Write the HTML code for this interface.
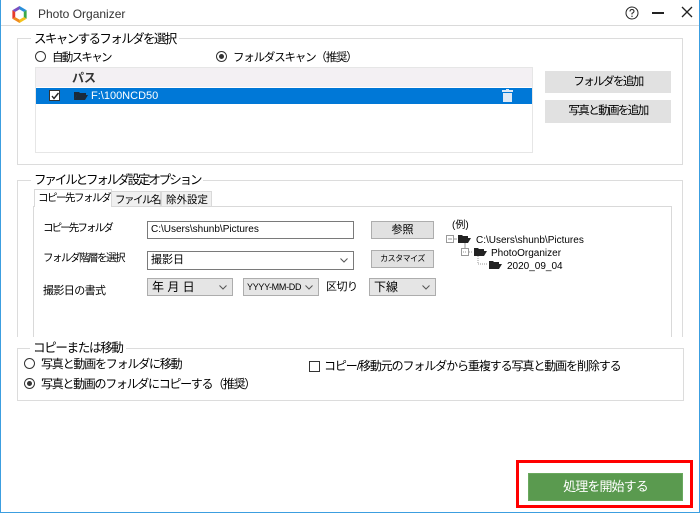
<!DOCTYPE html>
<html><head><meta charset="utf-8"><style>
*{margin:0;padding:0;box-sizing:border-box}
body{width:700px;height:513px;background:#fff;position:relative;overflow:hidden;font-family:"Liberation Sans","Noto Sans CJK JP",sans-serif;color:#000}
.a{position:absolute}
.t{font-size:12px;white-space:nowrap;line-height:14px}
.s{font-size:11px;white-space:nowrap;line-height:13px}
.grp{position:absolute;border:1px solid #dcdcdc}
.lbl{position:absolute;background:#fff;padding:0 3px;font-size:12.5px;line-height:15px;white-space:nowrap}
.btn{position:absolute;background:#e1e1e1;border:1px solid #e1e1e1;font-size:11.5px;letter-spacing:-1.6px;text-align:center;white-space:nowrap}
.radio{display:inline-block;width:11px;height:11px;border:1px solid #333;border-radius:50%;vertical-align:-1px;margin-right:5px;position:relative;background:#fff;letter-spacing:0}
.radio.on:after{content:"";position:absolute;left:2px;top:2px;width:5px;height:5px;border-radius:50%;background:#333}
.inp{position:absolute;border:1px solid #7a7a7a;background:#fff;font-size:11px;padding-left:3px;line-height:16px;white-space:nowrap}
.cmb{position:absolute;border:1px solid #adadad;background:#e5e5e5;font-size:12px;padding-left:4px;line-height:16px;white-space:nowrap}
.chev{position:absolute;right:5px;top:6px;width:8px;height:5px}
</style></head><body>
<div class="a" style="left:0;top:0;width:700px;height:513px;border:1px solid #3c9ee0;border-top:none"></div>
<div class="a" style="left:1px;top:25px;width:698px;height:1px;background:#dadada"></div>
<svg class="a" style="left:10px;top:5px" width="19" height="19" viewBox="0 0 20 20">
<path d="M10 1 L17.5 5.5 L14.5 7.2 L10 4.6Z" fill="#2a8fd9"/>
<path d="M17.5 5.5 L17.5 14.5 L14.5 12.8 L14.5 7.2Z" fill="#3aa84a"/>
<path d="M17.5 14.5 L10 19 L10 15.4 L14.5 12.8Z" fill="#f3c21b"/>
<path d="M10 19 L2.5 14.5 L5.5 12.8 L10 15.4Z" fill="#f08a1e"/>
<path d="M2.5 14.5 L2.5 5.5 L5.5 7.2 L5.5 12.8Z" fill="#e73a2b"/>
<path d="M2.5 5.5 L10 1 L10 4.6 L5.5 7.2Z" fill="#7a4fc0"/>
</svg>
<div class="a t" style="left:38px;top:7px;font-size:12px;color:#333">Photo Organizer</div>
<svg class="a" style="left:625px;top:6px" width="14" height="14" viewBox="0 0 14 14"><circle cx="7" cy="7" r="6" fill="none" stroke="#222" stroke-width="1"/><path d="M5 5.5 Q5 3.5 7 3.5 Q9 3.5 9 5.3 Q9 6.5 7 7.3 V8.5" fill="none" stroke="#222"/><circle cx="7" cy="10.3" r=".7" fill="#222"/></svg>
<div class="a" style="left:652px;top:12px;width:12px;height:1.5px;background:#222"></div>
<svg class="a" style="left:681px;top:6px" width="12" height="12"><path d="M1 1L11 11M11 1L1 11" stroke="#222" stroke-width="1.3"/></svg>

<!-- group 1 -->
<div class="grp" style="left:17px;top:38px;width:666px;height:127px"></div>
<div class="lbl" style="left:31px;top:32px;letter-spacing:-1.6px">スキャンするフォルダを選択</div>
<div class="a t" style="left:35px;top:51px;font-size:11.5px;letter-spacing:-1.7px"><span class="radio"></span><span style="margin-left:1px">自動スキャン</span></div>
<div class="a t" style="left:216px;top:51px;font-size:11.5px;letter-spacing:-1.2px"><span class="radio on"></span><span style="margin-left:1px">フォルダスキャン（推奨）</span></div>
<div class="a" style="left:35px;top:67px;width:498px;height:86px;border:1px solid #e6e6e6;background:#fff"></div>
<div class="a" style="left:36px;top:68px;width:496px;height:19px;background:#f3f0f3"></div>
<div class="a t" style="left:72px;top:71px;font-weight:bold;color:#333">パス</div>
<div class="a" style="left:36px;top:88px;width:496px;height:16px;background:#0078d7"></div>
<div class="a" style="left:49px;top:90px;width:11px;height:11px;background:#fff;border:1px solid #333"></div>
<svg class="a" style="left:50px;top:91px" width="10" height="10"><path d="M2 5L4 7.5L8.5 2" fill="none" stroke="#222" stroke-width="1.4"/></svg>
<svg class="a" style="left:74px;top:90px" width="14" height="11"><path d="M0 2H5L6 3H12V5H3L0 10Z" fill="#1b2a3a"/><path d="M3 5H14L11 10H0Z" fill="#1b2a3a"/></svg>
<div class="a s" style="left:91px;top:90px;color:#fff">F:\100NCD50</div>
<svg class="a" style="left:502px;top:89px" width="11" height="13"><rect x="0" y="1" width="11" height="2" fill="#dfe9f5"/><rect x="4" y="0" width="3" height="1" fill="#dfe9f5"/><rect x="1" y="4" width="9" height="9" fill="#dfe9f5"/></svg>
<div class="btn" style="left:545px;top:71px;width:126px;height:22px;line-height:20px">フォルダを追加</div>
<div class="btn" style="left:545px;top:100px;width:126px;height:23px;line-height:21px">写真と動画を追加</div>

<!-- group 2 -->
<div class="a" style="left:17px;top:180px;width:666px;height:157px;border:1px solid #dcdcdc;border-bottom:none"></div>
<div class="lbl" style="left:31px;top:173px;letter-spacing:-2.1px">ファイルとフォルダ設定オプション</div>
<div class="a" style="left:33px;top:206px;width:639px;height:131px;border:1px solid #d9d9d9;border-bottom:none;background:#fff"></div>
<div class="a" style="left:111px;top:191px;width:50px;height:16px;background:#f0f0f0;border:1px solid #d9d9d9"></div>
<div class="a" style="left:161px;top:191px;width:51px;height:16px;background:#f0f0f0;border:1px solid #d9d9d9"></div>
<div class="a" style="left:34px;top:189px;width:78px;height:18px;background:#fff;border:1px solid #d9d9d9;border-bottom:none"></div>
<div class="a s" style="left:38px;top:192px;font-size:10.5px;letter-spacing:-1.5px">コピー先フォルダ</div>
<div class="a s" style="left:115px;top:194px;font-size:10.5px;letter-spacing:-1.5px">ファイル名</div>
<div class="a s" style="left:166px;top:194px;font-size:10.5px;letter-spacing:0">除外設定</div>
<div class="a s" style="left:43px;top:222px;font-size:10.5px;letter-spacing:-1.9px">コピー先フォルダ</div>
<div class="a s" style="left:43px;top:252px;font-size:10.5px;letter-spacing:-1.5px">フォルダ階層を選択</div>
<div class="a s" style="left:43px;top:285px;letter-spacing:-0.6px">撮影日の書式</div>
<div class="inp" style="left:147px;top:221px;width:207px;height:18px;font-size:10px">C:\Users\shunb\Pictures</div>
<div class="inp" style="left:147px;top:251px;width:207px;height:19px;font-size:11px;line-height:17px">撮影日<svg class="chev" viewBox="0 0 8 5"><path d="M0.5 0.5L4 4L7.5 0.5" fill="none" stroke="#555"/></svg></div>
<div class="cmb" style="left:147px;top:278px;width:86px;height:18px">年 月 日<svg class="chev" viewBox="0 0 8 5"><path d="M0.5 0.5L4 4L7.5 0.5" fill="none" stroke="#555"/></svg></div>
<div class="cmb" style="left:243px;top:278px;width:76px;height:18px;font-size:9px;letter-spacing:-0.3px;padding-left:3px">YYYY-MM-DD<svg class="chev" viewBox="0 0 8 5"><path d="M0.5 0.5L4 4L7.5 0.5" fill="none" stroke="#555"/></svg></div>
<div class="a s" style="left:326px;top:281px;letter-spacing:-0.5px">区切り</div>
<div class="cmb" style="left:369px;top:278px;width:67px;height:18px">下線<svg class="chev" viewBox="0 0 8 5"><path d="M0.5 0.5L4 4L7.5 0.5" fill="none" stroke="#555"/></svg></div>
<div class="btn" style="left:371px;top:221px;width:63px;height:18px;border-color:#adadad;font-size:11px;letter-spacing:0;line-height:16px">参照</div>
<div class="btn" style="left:371px;top:250px;width:63px;height:18px;border-color:#adadad;font-size:8px;letter-spacing:-0.5px;line-height:16px">カスタマイズ</div>
<div class="a s" style="left:452px;top:219px;font-size:10px">(例)</div>
<svg class="a" style="left:445px;top:229px" width="60" height="45"><g fill="none" stroke="#999" stroke-width="1">
<rect x="1.5" y="6.5" width="7" height="7"/><path d="M3 10H7M9 10H12M20 14V20"/>
<rect x="16.5" y="19.5" width="7" height="7"/><path d="M18 23H22M24 23H28M33 27V35H43" stroke-dasharray="1 1"/></g></svg>
<svg class="a" style="left:458px;top:234px" width="14" height="10"><path d="M0 1H4L5 2H10V4H3L0 9Z M3 4H13L10 9H0Z" fill="#222"/></svg>
<div class="a s" style="left:476px;top:234px;font-size:10px">C:\Users\shunb\Pictures</div>
<svg class="a" style="left:474px;top:247px" width="14" height="10"><path d="M0 1H4L5 2H10V4H3L0 9Z M3 4H13L10 9H0Z" fill="#222"/></svg>
<div class="a s" style="left:491px;top:247px;font-size:10px">PhotoOrganizer</div>
<svg class="a" style="left:489px;top:260px" width="14" height="10"><path d="M0 1H4L5 2H10V4H3L0 9Z M3 4H13L10 9H0Z" fill="#222"/></svg>
<div class="a s" style="left:507px;top:260px;font-size:10px">2020_09_04</div>

<!-- group 3 -->
<div class="grp" style="left:17px;top:348px;width:667px;height:53px"></div>
<div class="lbl" style="left:30px;top:341px;letter-spacing:-1.3px">コピーまたは移動</div>
<div class="a t" style="left:24px;top:357px;font-size:12px;letter-spacing:-1.2px"><span class="radio"></span><span style="margin-left:1px">写真と動画をフォルダに移動</span></div>
<div class="a t" style="left:24px;top:377px;font-size:12px;letter-spacing:-1.3px"><span class="radio on"></span><span style="margin-left:1px">写真と動画のフォルダにコピーする（推奨）</span></div>
<div class="a" style="left:309px;top:361px;width:11px;height:11px;border:1px solid #333"></div>
<div class="a t" style="left:324px;top:359px;font-size:12px;letter-spacing:-1.1px">コピー/移動元のフォルダから重複する写真と動画を削除する</div>

<div class="a" style="left:516px;top:460px;width:177px;height:48px;border:3px solid #f00"></div>
<div class="a" style="left:528px;top:473px;width:155px;height:28px;background:#5a9a4f;border:1px solid #6aa95e;color:#fff;font-size:13px;letter-spacing:-0.9px;text-align:center;line-height:26px">処理を開始する</div>
</body></html>
